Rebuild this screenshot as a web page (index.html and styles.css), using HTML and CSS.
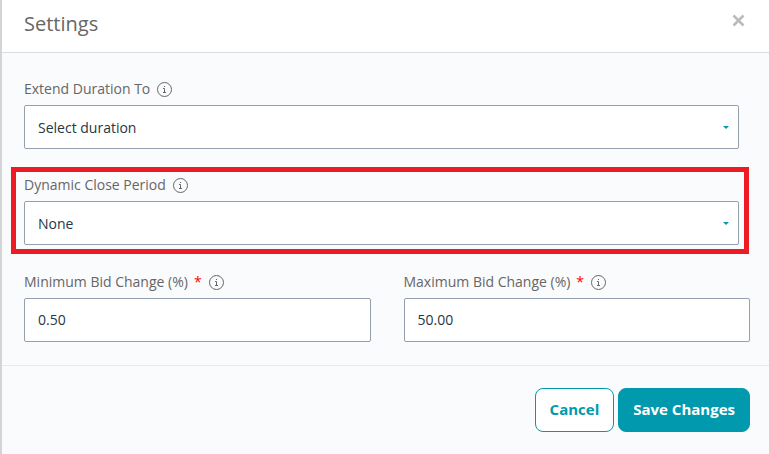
FILE: index.html
```html
<!DOCTYPE html>
<html lang="en">
<head>
<meta charset="utf-8">
<meta name="viewport" content="width=device-width, initial-scale=1">
<title>Settings</title>
<link rel="stylesheet" href="styles.css">
</head>
<body>
	<svg class="sprite">
		<symbol id="info" viewBox="0 0 16 16">
			<circle cx="8.5" cy="8.5" r="7" fill="none" stroke="currentColor" />
			<path d="M8 5h1v1H8z" fill="currentColor" />
			<path d="M7 7.5h1.5V12M7 11.5h3" fill="none" stroke="currentColor" />
		</symbol>
	</svg>
	<form class="modal">
		<header class="modal-header">
			<h1 class="modal-title">Settings</h1>
			<button type="button" class="close" aria-label="Close">
				<svg class="close-icon" viewBox="0 0 13 13"><path d="M1.5 1.5l10 10M11.5 1.5l-10 10" /></svg>
			</button>
		</header>
		<div class="modal-body">
			<div class="field field-wide">
				<label class="label" for="duration">Extend Duration To <svg class="info"><use href="#info" /></svg></label>
				<div class="select-wrap">
					<select class="control" id="duration">
						<option>Select duration</option>
					</select>
				</div>
			</div>
			<div class="field field-marked">
				<label class="label" for="period">Dynamic Close Period <svg class="info"><use href="#info" /></svg></label>
				<div class="select-wrap">
					<select class="control" id="period">
						<option>None</option>
					</select>
				</div>
			</div>
			<div class="row">
				<div class="field">
					<label class="label" for="min">Minimum Bid Change (%) <span class="required">*</span> <svg class="info"><use href="#info" /></svg></label>
					<input class="control" type="text" id="min" value="0.50">
				</div>
				<div class="field">
					<label class="label" for="max">Maximum Bid Change (%) <span class="required">*</span> <svg class="info"><use href="#info" /></svg></label>
					<input class="control" type="text" id="max" value="50.00">
				</div>
			</div>
		</div>
		<footer class="modal-footer">
			<button type="button" class="button">Cancel</button>
			<button type="submit" class="button button-primary">Save Changes</button>
		</footer>
	</form>
</body>
</html>
```
FILE: styles.css
```css
* {
	box-sizing: border-box;
}

body {
	margin: 0;
	background: #fafbfd;
	color: #666;
	font: 14px/20px "Open Sans", sans-serif;
}

.sprite {
	display: none;
}

.modal {
	min-height: 100vh;
	border-left: 2px solid #d3d4d6;
}

.modal-header {
	display: flex;
	justify-content: space-between;
	align-items: flex-start;
	padding: 10px 24px 14px 22px;
	background: #fff;
	border-bottom: 1px solid #ddd;
}

.modal-title {
	margin: 0;
	font-size: 20px;
	font-weight: 400;
	line-height: 28px;
}

.close {
	display: flex;
	padding: 4px 0;
	border: 0;
	background: none;
	cursor: pointer;
}

.close-icon {
	width: 13px;
	height: 13px;
	fill: none;
	stroke: #bbb;
	stroke-width: 2.6;
}

.modal-body {
	display: flex;
	flex-direction: column;
	gap: 18px;
	padding: 26px 19px 23px 22px;
}

.row {
	display: grid;
	grid-template-columns: 1fr 1fr;
	gap: 33px;
}

.field-wide {
	margin-right: 11px;
}

.field-marked {
	margin: 0 1px 0 -13px;
	padding: 3px 5px 4px 8px;
	border: 5px solid #ed1c24;
}

.label {
	display: flex;
	align-items: center;
	gap: 6px;
	margin-bottom: 6px;
}

.required {
	color: #f00;
}

.info {
	width: 16px;
	height: 16px;
}

.control {
	display: block;
	width: 100%;
	height: 44px;
	padding: 0 13px 2px;
	border: 1px solid #94a0ae;
	border-radius: 2px;
	background: #fff;
	color: #263645;
	font: inherit;
	appearance: none;
}

.select-wrap {
	display: grid;
	align-items: center;
}

.select-wrap > .control,
.select-wrap::after {
	grid-area: 1 / 1;
}

.select-wrap > .control {
	padding: 2px 13px 0;
}

/* small caret on the right of the drop-downs */
.select-wrap::after {
	content: "";
	justify-self: end;
	margin-right: 10px;
	border: 3px solid transparent;
	border-top-color: #0099ad;
	border-bottom: 0;
	pointer-events: none;
}

.modal-footer {
	display: flex;
	justify-content: flex-end;
	gap: 4px;
	padding: 22px 19px;
	border-top: 1px solid #e8eaec;
}

.button {
	height: 44px;
	padding: 0 14px 2px;
	border: 1px solid #0099ad;
	border-radius: 8px;
	background: #fff;
	color: #0099ad;
	font: bold 15px/20px "Open Sans", sans-serif;
	cursor: pointer;
}

.button-primary {
	background: #0099ad;
	color: #fff;
}
```
